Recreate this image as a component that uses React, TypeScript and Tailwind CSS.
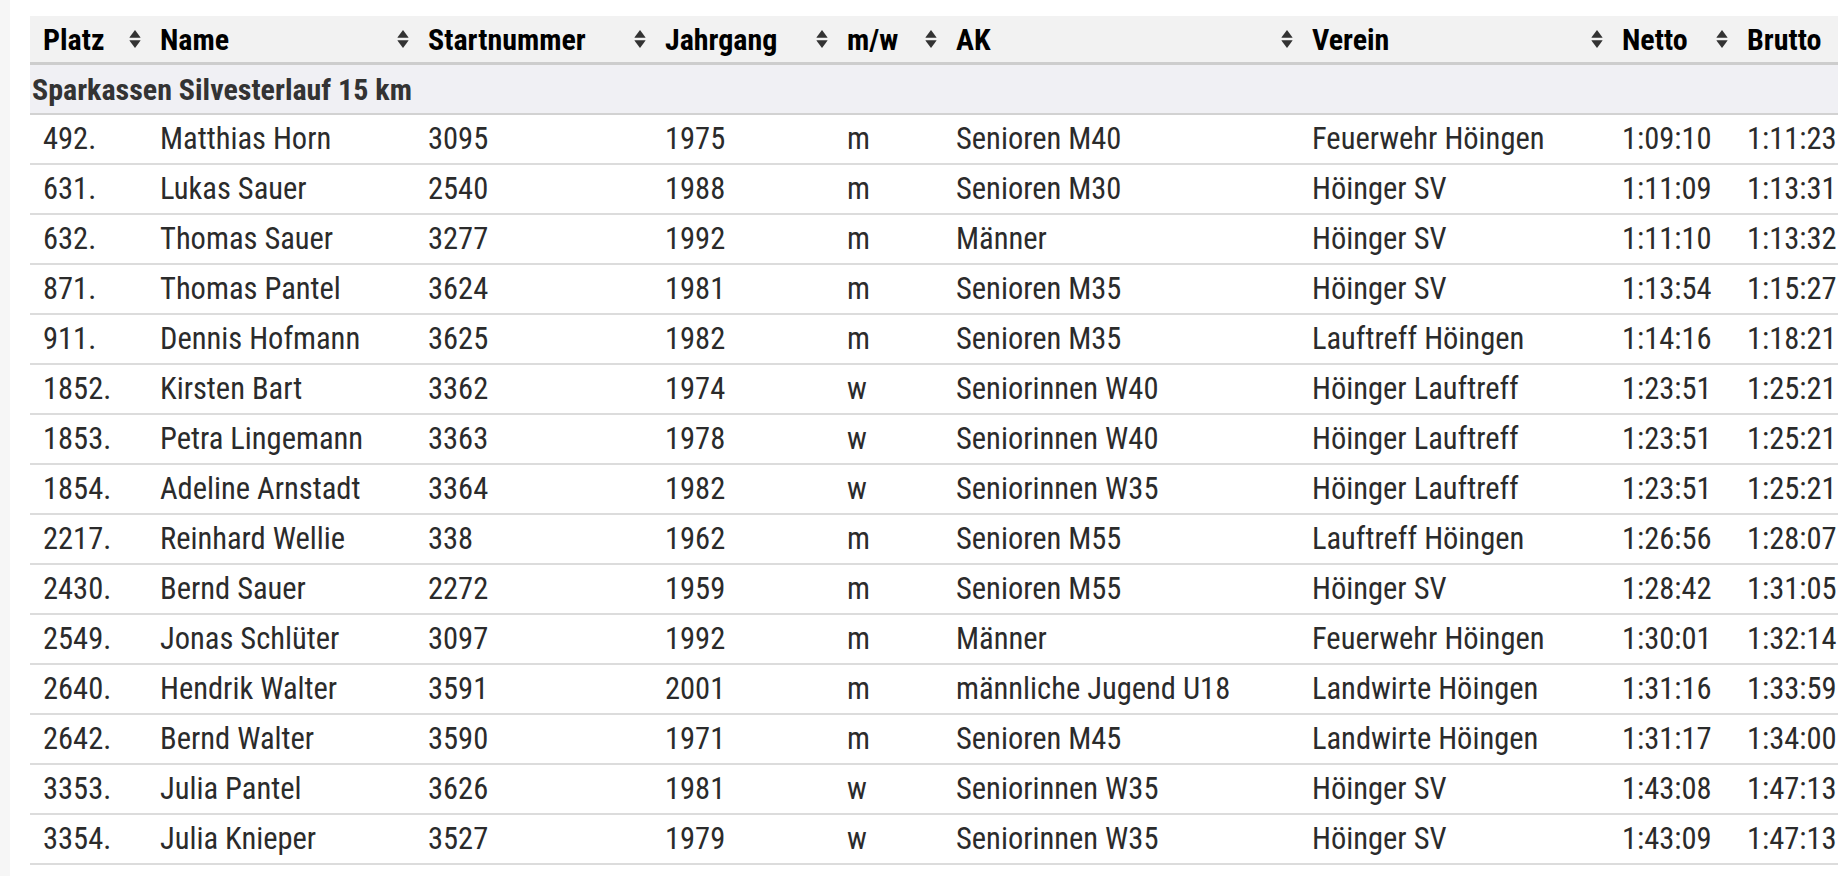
type Row = {
  platz: string;
  name: string;
  nr: string;
  jahr: string;
  mw: string;
  ak: string;
  verein: string;
  netto: string;
  brutto: string;
};

const rows: Row[] = [
  { platz: "492.", name: "Matthias Horn", nr: "3095", jahr: "1975", mw: "m", ak: "Senioren M40", verein: "Feuerwehr Höingen", netto: "1:09:10", brutto: "1:11:23" },
  { platz: "631.", name: "Lukas Sauer", nr: "2540", jahr: "1988", mw: "m", ak: "Senioren M30", verein: "Höinger SV", netto: "1:11:09", brutto: "1:13:31" },
  { platz: "632.", name: "Thomas Sauer", nr: "3277", jahr: "1992", mw: "m", ak: "Männer", verein: "Höinger SV", netto: "1:11:10", brutto: "1:13:32" },
  { platz: "871.", name: "Thomas Pantel", nr: "3624", jahr: "1981", mw: "m", ak: "Senioren M35", verein: "Höinger SV", netto: "1:13:54", brutto: "1:15:27" },
  { platz: "911.", name: "Dennis Hofmann", nr: "3625", jahr: "1982", mw: "m", ak: "Senioren M35", verein: "Lauftreff Höingen", netto: "1:14:16", brutto: "1:18:21" },
  { platz: "1852.", name: "Kirsten Bart", nr: "3362", jahr: "1974", mw: "w", ak: "Seniorinnen W40", verein: "Höinger Lauftreff", netto: "1:23:51", brutto: "1:25:21" },
  { platz: "1853.", name: "Petra Lingemann", nr: "3363", jahr: "1978", mw: "w", ak: "Seniorinnen W40", verein: "Höinger Lauftreff", netto: "1:23:51", brutto: "1:25:21" },
  { platz: "1854.", name: "Adeline Arnstadt", nr: "3364", jahr: "1982", mw: "w", ak: "Seniorinnen W35", verein: "Höinger Lauftreff", netto: "1:23:51", brutto: "1:25:21" },
  { platz: "2217.", name: "Reinhard Wellie", nr: "338", jahr: "1962", mw: "m", ak: "Senioren M55", verein: "Lauftreff Höingen", netto: "1:26:56", brutto: "1:28:07" },
  { platz: "2430.", name: "Bernd Sauer", nr: "2272", jahr: "1959", mw: "m", ak: "Senioren M55", verein: "Höinger SV", netto: "1:28:42", brutto: "1:31:05" },
  { platz: "2549.", name: "Jonas Schlüter", nr: "3097", jahr: "1992", mw: "m", ak: "Männer", verein: "Feuerwehr Höingen", netto: "1:30:01", brutto: "1:32:14" },
  { platz: "2640.", name: "Hendrik Walter", nr: "3591", jahr: "2001", mw: "m", ak: "männliche Jugend U18", verein: "Landwirte Höingen", netto: "1:31:16", brutto: "1:33:59" },
  { platz: "2642.", name: "Bernd Walter", nr: "3590", jahr: "1971", mw: "m", ak: "Senioren M45", verein: "Landwirte Höingen", netto: "1:31:17", brutto: "1:34:00" },
  { platz: "3353.", name: "Julia Pantel", nr: "3626", jahr: "1981", mw: "w", ak: "Seniorinnen W35", verein: "Höinger SV", netto: "1:43:08", brutto: "1:47:13" },
  { platz: "3354.", name: "Julia Knieper", nr: "3527", jahr: "1979", mw: "w", ak: "Seniorinnen W35", verein: "Höinger SV", netto: "1:43:09", brutto: "1:47:13" },
];

const columns = ["Platz", "Name", "Startnummer", "Jahrgang", "m/w", "AK", "Verein", "Netto", "Brutto"];

// column widths are fixed, the last one runs off the right edge
const gridCols =
  "grid grid-cols-[117px_268px_237px_182px_109px_356px_310px_125px_200px]";

function SortIcon() {
  return (
    <svg width="12" height="20" viewBox="0 0 12 20" className="shrink-0 text-[#333]">
      <path d="M6 1 L11.4 8.3 Q11.7 8.8 11.1 8.8 H0.9 Q0.3 8.8 0.6 8.3 Z" fill="currentColor" />
      <path d="M0.9 11.2 H11.1 Q11.7 11.2 11.4 11.7 L6 19 L0.6 11.7 Q0.3 11.2 0.9 11.2 Z" fill="currentColor" />
    </svg>
  );
}

export default function App() {
  return (
    <div className="flex h-screen w-full overflow-hidden bg-white font-['Roboto_Condensed','Roboto',sans-serif]">
      <div className="w-[10px] shrink-0 bg-[#f6f6f6]" />
      <div className="min-w-0 flex-1 overflow-hidden pl-[20px] pt-[16px]">
        <div className="w-max">
          {/* header */}
          <div className={`${gridCols} h-[49px] border-b-[3px] border-[#cdcdcd] bg-[#f2f2f2]`}>
            {columns.map((c, i) => (
              <div
                key={c}
                className="flex items-center justify-between pl-[13px] pr-[6px] text-[30px] font-bold text-black"
              >
                <span>{c}</span>
                {i < columns.length - 1 && <SortIcon />}
              </div>
            ))}
          </div>

          {/* group */}
          <div className="flex h-[50px] items-center border-b-2 border-[#d2d2d2] bg-[#f0f0f4] pl-[2px] text-[30px] font-bold text-[#333]">
            Sparkassen Silvesterlauf 15 km
          </div>

          {/* results */}
          {rows.map((r) => (
            <div
              key={r.platz}
              className={`${gridCols} h-[50px] border-b-2 border-[#dcdcdc] text-[30.5px] leading-[48px] text-[#2b2b2b]`}
            >
              <div className="pl-[13px]">{r.platz}</div>
              <div className="pl-[13px]">{r.name}</div>
              <div className="pl-[13px]">{r.nr}</div>
              <div className="pl-[13px]">{r.jahr}</div>
              <div className="pl-[13px]">{r.mw}</div>
              <div className="pl-[13px]">{r.ak}</div>
              <div className="pl-[13px]">{r.verein}</div>
              <div className="pl-[13px]">{r.netto}</div>
              <div className="pl-[13px]">{r.brutto}</div>
            </div>
          ))}
        </div>
      </div>
    </div>
  );
}
